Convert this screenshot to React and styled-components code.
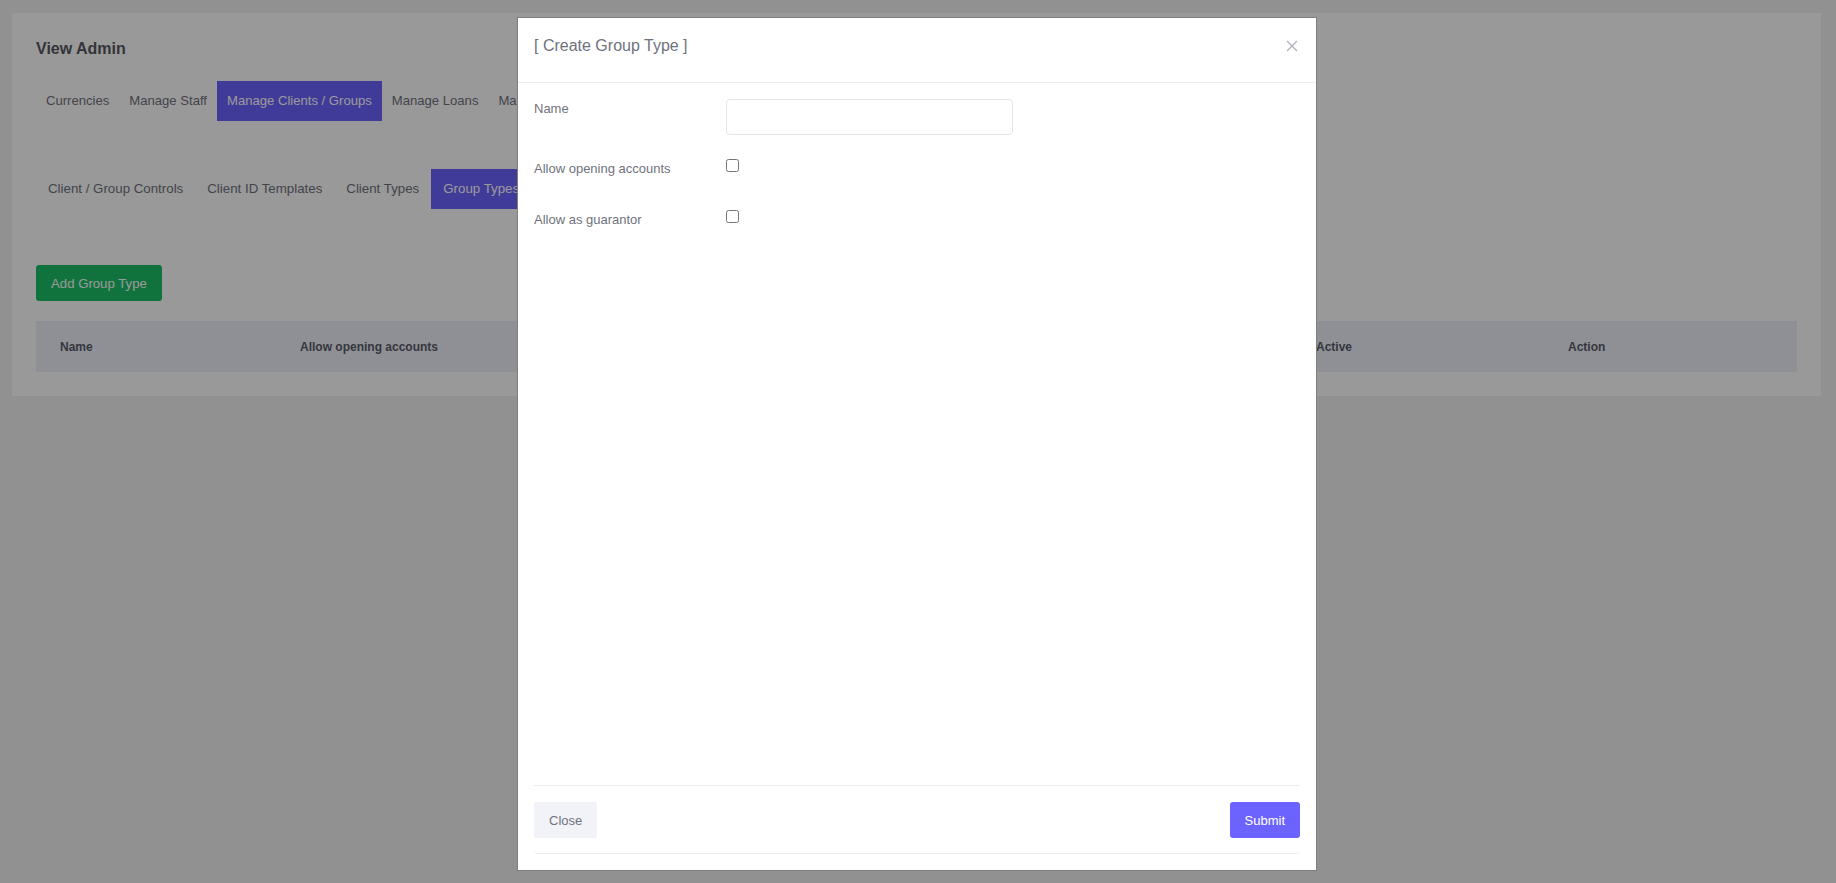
import React from 'react'
import styled, { createGlobalStyle } from 'styled-components'

const GlobalStyle = createGlobalStyle`
  html, body {
    margin: 0;
    padding: 0;
    background: #f2f2f4;
    font-family: "Liberation Sans", Arial, sans-serif;
  }
  * { box-sizing: border-box; }
`

const Page = styled.div`
  padding: 13px 15px 0 12px;
  min-height: 883px;
`

const Card = styled.div`
  background: #ffffff;
  padding: 24px;
`

const Title = styled.h3`
  margin: 0;
  font-size: 16px;
  line-height: 24px;
  font-weight: 700;
  color: #575962;
`

const TabBar = styled.div`
  display: flex;
  margin-top: ${p => p.top}px;
`

const Tab = styled.div`
  height: 40px;
  line-height: 40px;
  padding: 0 ${p => p.pad}px;
  font-size: ${p => p.size}px;
  color: ${p => (p.active ? '#ffffff' : '#6f727d')};
  background: ${p => (p.active ? '#6c63ff' : 'transparent')};
  white-space: nowrap;
  cursor: pointer;
`

const AddButton = styled.button`
  margin-top: 56px;
  height: 36px;
  padding: 0 15px;
  border: none;
  border-radius: 3px;
  background: #1cc067;
  color: #ffffff;
  font-family: inherit;
  font-size: 13.2px;
`

const TableHead = styled.div`
  margin-top: 20px;
  display: grid;
  grid-template-columns: 240px 254px 254px 254px 254px 252px 254px;
  height: 51px;
  background: #eef1f8;
`

const HeadCell = styled.div`
  display: flex;
  align-items: center;
  padding-left: 24px;
  font-size: 12px;
  font-weight: 700;
  color: #595b68;
  white-space: nowrap;
  overflow: hidden;
`

const Overlay = styled.div`
  position: fixed;
  inset: 0;
  background: rgba(0, 0, 0, 0.4);
`

const Modal = styled.div`
  position: fixed;
  top: 17px;
  left: 517px;
  width: 800px;
  height: 854px;
  background: #ffffff;
  border: 1px solid rgba(0, 0, 0, 0.5);
  display: flex;
  flex-direction: column;
`

const ModalHeader = styled.div`
  height: 65px;
  padding: 18px 17px 0 16px;
  border-bottom: 1px solid #ebedf2;
  display: flex;
  justify-content: space-between;
  align-items: flex-start;
`

const ModalTitle = styled.div`
  font-size: 16px;
  line-height: 20px;
  color: #6f727d;
`

const CloseX = styled.button`
  margin-top: 3px;
  width: 14px;
  height: 14px;
  padding: 0;
  border: none;
  background: transparent;
  display: flex;
  align-items: center;
  justify-content: center;
  cursor: pointer;
`

const ModalBody = styled.div`
  flex: 1;
  padding: 16px 16px 0 16px;
`

const FormRow = styled.div`
  display: flex;
  align-items: flex-start;
  min-height: ${p => p.h}px;
  margin-bottom: 24px;
`

const Label = styled.label`
  width: 192px;
  flex-shrink: 0;
  font-size: 13px;
  line-height: 20px;
  color: #6f727d;
`

const TextInput = styled.input`
  width: 287px;
  height: 36px;
  border: 1px solid #e2e5ec;
  border-radius: 4px;
  padding: 0 12px;
  font-family: inherit;
  font-size: 13px;
  outline: none;
`

const Check = styled.input`
  margin: 0;
  width: 13px;
  height: 13px;
`

const Footer = styled.div`
  margin: 0 16px 16px 16px;
  padding: 16px 0 15px 0;
  border-top: 1px solid #ebedf2;
  border-bottom: 1px solid #ebedf2;
  border-radius: 0 0 4px 4px;
  display: flex;
  justify-content: space-between;
`

const FooterButton = styled.button`
  height: 36px;
  padding: 0 15px;
  border: none;
  border-radius: 3px;
  font-family: inherit;
  font-size: 13px;
  background: ${p => (p.primary ? '#6c63ff' : '#f2f3f8')};
  color: ${p => (p.primary ? '#ffffff' : '#6f727d')};
  cursor: pointer;
`

const mainTabs = ['Currencies', 'Manage Staff', 'Manage Clients / Groups', 'Manage Loans', 'Manage Savings']
const subTabs = ['Client / Group Controls', 'Client ID Templates', 'Client Types', 'Group Types']
const columns = ['Name', 'Allow opening accounts', 'Allow as guarantor', 'Description', 'Created', 'Active', 'Action']

const App = () => (
  <>
    <GlobalStyle />
    <Page>
      <Card>
        <Title>View Admin</Title>

        <TabBar top={20}>
          {mainTabs.map(t => (
            <Tab key={t} pad={10} size={13.1} active={t === 'Manage Clients / Groups'}>{t}</Tab>
          ))}
        </TabBar>

        <TabBar top={48}>
          {subTabs.map(t => (
            <Tab key={t} pad={12} size={13.3} active={t === 'Group Types'}>{t}</Tab>
          ))}
        </TabBar>

        <AddButton>Add Group Type</AddButton>

        <TableHead>
          {columns.map(c => (
            <HeadCell key={c}>{c}</HeadCell>
          ))}
        </TableHead>
      </Card>
    </Page>

    <Overlay />

    <Modal>
      <ModalHeader>
        <ModalTitle>[ Create Group Type ]</ModalTitle>
        <CloseX aria-label="close">
          <svg width="12" height="12" viewBox="0 0 12 12">
            <path d="M1 1 L11 11 M11 1 L1 11" stroke="#b2b3bd" strokeWidth="1.4" fill="none" />
          </svg>
        </CloseX>
      </ModalHeader>

      <ModalBody>
        <FormRow h={36}>
          <Label>Name</Label>
          <TextInput type="text" />
        </FormRow>
        <FormRow h={27}>
          <Label>Allow opening accounts</Label>
          <Check type="checkbox" />
        </FormRow>
        <FormRow h={27}>
          <Label>Allow as guarantor</Label>
          <Check type="checkbox" />
        </FormRow>
      </ModalBody>

      <Footer>
        <FooterButton>Close</FooterButton>
        <FooterButton primary>Submit</FooterButton>
      </Footer>
    </Modal>
  </>
)

export default App
